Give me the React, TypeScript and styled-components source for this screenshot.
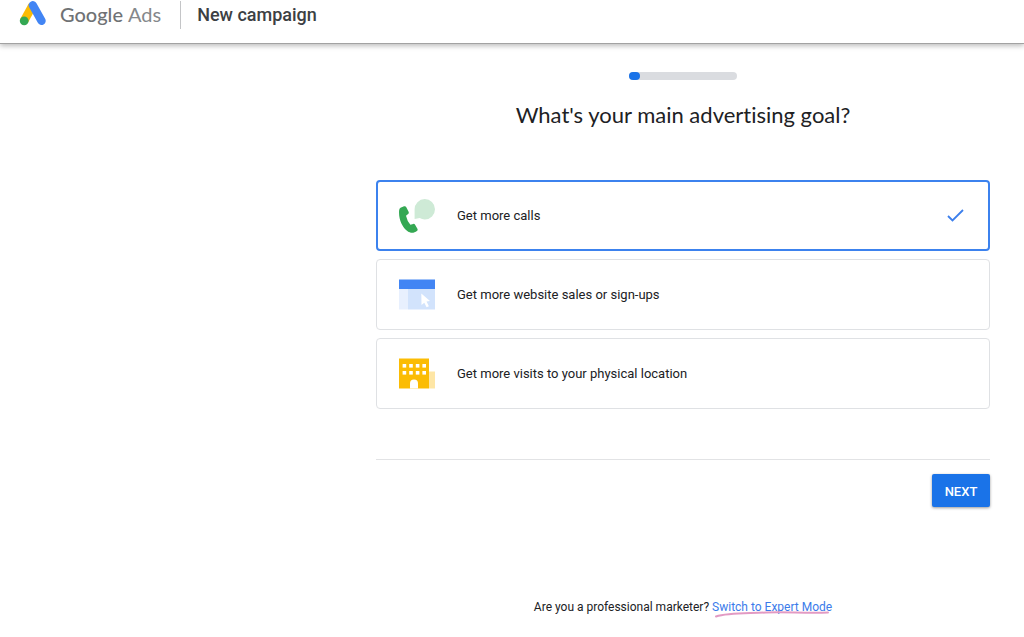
import React, { useState } from 'react';
import styled, { createGlobalStyle } from 'styled-components';

const GlobalStyle = createGlobalStyle`
  * { box-sizing: border-box; }
  body {
    margin: 0;
    background: #fff;
    color: #202124;
    font-family: Roboto, "Liberation Sans", sans-serif;
  }
`;

const Header = styled.header`
  display: flex;
  align-items: flex-start;
  height: 44px;
  padding-left: 19px;
  background: #fff;
  border-bottom: 1px solid #a2a2a2;
  box-shadow: 0 2px 5px rgba(0, 0, 0, 0.26);
`;

const Brand = styled.a`
  display: flex;
  align-items: flex-start;
  color: #6f7275;
  text-decoration: none;
`;

const BrandName = styled.span`
  display: flex;
  gap: 5px;
  margin-left: 13px;
  font-family: Lato, sans-serif;
  font-size: 20px;
  font-weight: 500;
  line-height: 28px;
`;

const Product = styled.span`
  color: #85888b;
  font-weight: 400;
`;

const PageName = styled.h2`
  margin: 1px 0 0 19px;
  padding-left: 16px;
  border-left: 1px solid #c4c5c7;
  color: #3c4043;
  font-size: 18px;
  font-weight: 500;
  line-height: 28px;
`;

const Main = styled.main`
  display: flex;
  flex-direction: column;
  padding: 28px 34px 16px 376px;
`;

const Progress = styled.div`
  align-self: center;
  width: 108px;
  height: 8px;
  border-radius: 4px;
  background: #dadce0;
`;

const ProgressFill = styled.div`
  width: 11px;
  height: 8px;
  border-radius: 4px;
  background: #1a73e8;
`;

const Title = styled.h1`
  margin: 19px 0 49px;
  font-family: Lato, sans-serif;
  font-size: 22px;
  font-variant-ligatures: none;
  font-weight: 400;
  line-height: 32px;
  text-align: center;
`;

const Goals = styled.fieldset`
  display: flex;
  flex-direction: column;
  gap: 8px;
  min-width: 0;
  margin: 0;
  padding: 0;
  border: 0;
`;

const GoalCard = styled.label<{ $selected: boolean }>`
  display: flex;
  align-items: center;
  height: 71px;
  padding: ${(p) => (p.$selected ? '0 24px 0 21px' : '0 25px 0 22px')};
  border: ${(p) => (p.$selected ? '2px solid #3c82ee' : '1px solid #dfe1e4')};
  border-radius: 4px;
  font-size: 13px;
  line-height: 20px;
  cursor: pointer;
`;

const GoalRadio = styled.input`
  appearance: none;
  width: 0;
  height: 0;
  margin: 0;
`;

const GoalName = styled.span`
  flex: 1;
  margin-left: 22px;
`;

const Actions = styled.div`
  display: flex;
  justify-content: flex-end;
  margin-top: 50px;
  padding-top: 14px;
  border-top: 1px solid #e2e3e5;
`;

const NextButton = styled.button`
  width: 58px;
  height: 33px;
  padding: 1px 0 0;
  border: 0;
  border-radius: 2px;
  background: #1a73e8;
  box-shadow: 0 1px 3px rgba(0, 0, 0, 0.4);
  color: #fff;
  font-family: inherit;
  font-size: 13px;
  font-weight: 500;
  cursor: pointer;
`;

const ExpertNote = styled.p`
  align-self: center;
  margin: 90px 0 0;
  font-size: 12px;
  line-height: 20px;
`;

const ExpertLink = styled.a`
  position: relative;
  color: #3b7bea;
  text-decoration: none;
`;

const Scribble = styled.svg`
  position: absolute;
  top: 10px;
  left: 2px;
`;

const AdsLogo = () => (
  <svg width="28" height="26" viewBox="0 0 28 26" aria-hidden="true">
    <path d="M5 21 13.5 5.5" stroke="#fbbc04" strokeWidth="8.6" />
    <path d="M13.8 5.3 22.5 20.8" stroke="#4285f4" strokeWidth="8.4" strokeLinecap="round" />
    <circle cx="5.2" cy="20.8" r="4.4" fill="#34a853" />
  </svg>
);

const CallsIcon = () => (
  <svg width="36" height="36" viewBox="0 0 36 36" aria-hidden="true">
    <path d="M15.6 21V11.500A10.2 10.2 0 1 1 25.800 21.500c-2 0-3.500-.5-5-1.400z" fill="#ceead6" />
    <path
      d="M1.500 9.700 5 8.300q1.600-.5 2.300 1l2.300 4.400q.6 1.400-.5 2.400l-2.100 1.700q1.200 5.600 4.400 8.900l2.700-.8q1.400-.3 2 .9l2.300 3.900q.7 1.400-.5 2.200c-2.600 2.100-6 2.700-9.300.4C3.200 29.500-.6 21 .1 12.500q.2-2 1.400-2.800z"
      fill="#34a853"
    />
  </svg>
);

const WebsiteIcon = () => (
  <svg width="36" height="32" viewBox="0 0 36 32" aria-hidden="true">
    <path d="M0 .5h36V10H0z" fill="#4285f4" />
    <path d="M0 10h9v20.500H0z" fill="#e8f0fe" />
    <path d="M9 10h27v20.500H9z" fill="#d2e3fc" />
    <path d="m22.300 14.500 8.700 7.500-3.500.6 2.400 4.600-2.300 1.100-2.300-4.600-2.800 2.300z" fill="#fff" />
  </svg>
);

const LocationIcon = () => (
  <svg width="36" height="32" viewBox="0 0 36 32" aria-hidden="true">
    <path d="M30 13.500h6v17h-6z" fill="#fee6a5" />
    <path d="M0 .5h30v30H0z" fill="#fbbc04" />
    <path d="M11 30.500v-5a4 4 0 0 1 8 0v5z" fill="#fff" />
    {[3.6, 10.2, 16.8, 23.4].map((x) => (
      <React.Fragment key={x}>
        <rect x={x} y="6" width="3.6" height="3.6" fill="#fff" />
        <rect x={x} y="13" width="3.6" height="3.6" fill="#fff" />
      </React.Fragment>
    ))}
  </svg>
);

const CheckIcon = () => (
  <svg width="17" height="14" viewBox="0 0 17 14" aria-hidden="true">
    <path d="m1 7 4.500 4.500L16 1" fill="none" stroke="#3c7fec" strokeWidth="1.8" />
  </svg>
);

const goals = [
  { id: 'calls', name: 'Get more calls', Icon: CallsIcon },
  { id: 'website', name: 'Get more website sales or sign-ups', Icon: WebsiteIcon },
  { id: 'visits', name: 'Get more visits to your physical location', Icon: LocationIcon },
];

export default function App() {
  const [goal, setGoal] = useState('calls');
  return (
    <>
      <GlobalStyle />
      <Header>
        <Brand href="#">
          <AdsLogo />
          <BrandName>
            Google <Product>Ads</Product>
          </BrandName>
        </Brand>
        <PageName>New campaign</PageName>
      </Header>
      <Main>
        <Progress role="progressbar" aria-valuenow={10} aria-valuemin={0} aria-valuemax={100}>
          <ProgressFill />
        </Progress>
        <Title id="goal-title">What's your main advertising goal?</Title>
        <Goals aria-labelledby="goal-title">
          {goals.map(({ id, name, Icon }) => (
            <GoalCard key={id} $selected={goal === id}>
              <GoalRadio
                type="radio"
                name="goal"
                value={id}
                checked={goal === id}
                onChange={() => setGoal(id)}
              />
              <Icon />
              <GoalName>{name}</GoalName>
              {goal === id && <CheckIcon />}
            </GoalCard>
          ))}
        </Goals>
        <Actions>
          <NextButton type="button">NEXT</NextButton>
        </Actions>
        <ExpertNote>
          Are you a professional marketer?{' '}
          <ExpertLink href="#">
            Switch to Expert Mode
            <Scribble width="116" height="8" viewBox="0 0 116 8" aria-hidden="true">
              <path
                d="M2 6.500C14 2.500 34 3.500 52 2.500S92 3.500 114 2.500"
                fill="none"
                stroke="#e29ac3"
                strokeWidth="2"
                strokeLinecap="round"
              />
            </Scribble>
          </ExpertLink>
        </ExpertNote>
      </Main>
    </>
  );
}
